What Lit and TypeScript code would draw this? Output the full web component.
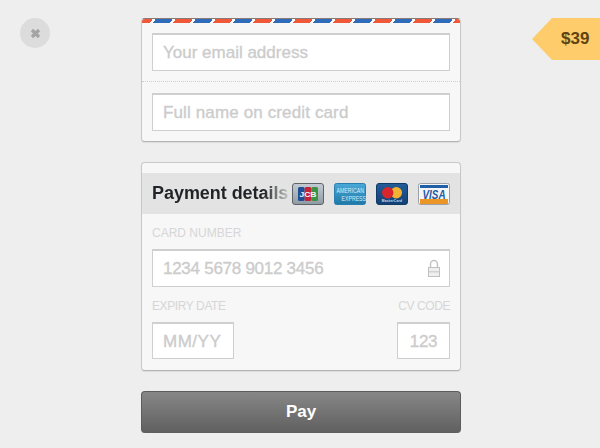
import { LitElement, html, css, svg } from 'lit';
import { customElement } from 'lit/decorators.js';

const jcb = svg`<svg class="cc" width="32" height="22" viewBox="0 0 32 22">
  <defs><linearGradient id="j" x1="0" y1="0" x2="0" y2="1"><stop offset="0" stop-color="#c3ccd4"/><stop offset="1" stop-color="#8f9aa3"/></linearGradient></defs>
  <rect x=".5" y=".5" width="31" height="21" rx="2.5" fill="url(#j)" stroke="#5d6468"/>
  <rect x="6" y="4" width="6.6" height="14" rx="1.5" fill="#1c4f96"/>
  <rect x="12.7" y="4" width="6.6" height="14" rx="1.5" fill="#c8213a"/>
  <rect x="19.4" y="4" width="6.6" height="14" rx="1.5" fill="#3a9444"/>
  <text x="7.5" y="14" font-family="Liberation Sans" font-size="8" font-weight="700" textLength="17" lengthAdjust="spacingAndGlyphs" fill="#f2f4f6">JCB</text>
</svg>`;

const amex = svg`<svg class="cc" width="32" height="22" viewBox="0 0 32 22">
  <defs><linearGradient id="a" x1="0" y1="0" x2="0" y2="1"><stop offset="0" stop-color="#4aa9d8"/><stop offset="1" stop-color="#1d78a8"/></linearGradient></defs>
  <rect x=".5" y=".5" width="31" height="21" rx="2" fill="url(#a)" stroke="#2b7fae"/>
  <text transform="translate(2.5 10) scale(1 1.3)" font-family="Liberation Sans" font-size="5.2" fill="#d8eef9">AMERICAN</text>
  <text transform="translate(7.5 18) scale(1 1.3)" font-family="Liberation Sans" font-size="5.2" fill="#d8eef9">EXPRESS</text>
</svg>`;

const master = svg`<svg class="cc" width="32" height="22" viewBox="0 0 32 22">
  <defs><linearGradient id="m" x1="0" y1="0" x2="0" y2="1"><stop offset="0" stop-color="#235d9a"/><stop offset="1" stop-color="#123f73"/></linearGradient></defs>
  <rect x=".5" y=".5" width="31" height="21" rx="2.5" fill="url(#m)" stroke="#123a66"/>
  <circle cx="20.3" cy="9.7" r="5.7" fill="#f2b233"/>
  <circle cx="11.7" cy="9.7" r="5.7" fill="#d8262c"/>
  <text x="16" y="18.8" text-anchor="middle" font-family="Liberation Sans" font-size="3.2" font-weight="700" letter-spacing=".3" fill="#d6e2ee">MasterCard</text>
</svg>`;

const visa = svg`<svg class="cc" width="32" height="22" viewBox="0 0 32 22">
  <rect x=".5" y=".5" width="31" height="21" rx="2" fill="#f4f5f6" stroke="#9aa0a5"/>
  <rect x="2" y="2" width="28" height="3" fill="#1f5fa8"/>
  <rect x="2" y="16" width="28" height="5" fill="#ea9526"/>
  <text x="4.5" y="15.6" font-family="Liberation Sans" font-size="12" font-weight="700" font-style="italic" textLength="23" lengthAdjust="spacingAndGlyphs" fill="#1c5aa6">VISA</text>
</svg>`;

const lock = svg`<svg width="12" height="18" viewBox="0 0 12 18" fill="none">
  <path d="M2.5 9V5a3.5 3.5 0 0 1 7 0V9" stroke="#c4c4c4" stroke-width="1.5"/>
  <rect x=".5" y="8.5" width="11" height="9" fill="#efefef" stroke="#c0c0c0"/>
  <rect x="1" y="12" width="10" height="1.5" fill="#d2d2d2"/>
</svg>`;

@customElement('app-root')
export class AppRoot extends LitElement {
  static styles = css`
    :host {
      display: block;
      width: 600px;
      height: 448px;
      overflow: hidden;
      position: relative;
      background: #eeeeee;
      font-family: 'Liberation Sans', Arial, sans-serif;
    }
    .close {
      position: absolute;
      left: 20px;
      top: 18px;
      width: 30px;
      height: 30px;
      border-radius: 50%;
      background: #dcdcdc;
      display: flex;
      align-items: center;
      justify-content: center;
    }
    .price {
      position: absolute;
      right: 0;
      top: 18px;
      width: 68px;
      height: 42px;
      box-sizing: border-box;
      padding-left: 29px;
      background: #fecc6b;
      clip-path: polygon(20px 0, 100% 0, 100% 100%, 20px 100%, 0 50%);
      color: #5f4410;
      font-size: 17px;
      font-weight: 700;
      line-height: 42px;
    }
    .col {
      width: 320px;
      margin-left: 141px;
      padding-top: 18px;
      display: flex;
      flex-direction: column;
    }
    .card {
      box-sizing: border-box;
      width: 320px;
      background: #f7f7f7;
      border: 1px solid #c8c8c8;
      border-bottom-color: #b4b4b4;
      border-radius: 4px;
      box-shadow: 0 1px 1px rgba(0, 0, 0, 0.08);
    }
    .who {
      height: 124px;
      overflow: hidden;
      border-top-color: #8a7a76;
    }
    .stripe {
      height: 4px;
      background: repeating-linear-gradient(
        -60deg,
        #f0583a -8.72px 6px,
        #ffffff 6px 8.6px,
        #2f6cbc 8.6px 23.3px,
        #ffffff 23.3px 25.92px
      );
    }
    .input {
      box-sizing: border-box;
      background: #ffffff;
      border: 1px solid #cfcfcf;
      border-top-width: 2px;
      height: 38px;
      color: #cccccc;
      font-size: 17px;
      line-height: 35px;
      padding: 0 10px;
      white-space: nowrap;
      position: relative;
      -webkit-text-stroke: 0.35px #cccccc;
    }
    .who .input {
      margin: 10px 10px 0;
    }
    .who .name {
      letter-spacing: 0.13px;
    }
    .digits {
      letter-spacing: -0.27px;
    }
    .dots {
      height: 0;
      border-top: 1px dotted #d0d0d0;
      margin-top: 10px;
    }
    .who .dots + .input {
      margin-top: 11px;
    }
    .pay {
      height: 209px;
      margin-top: 20px;
      padding-top: 10px;
    }
    .band {
      height: 41px;
      background: #e3e3e3;
      display: flex;
      align-items: center;
      padding: 0 10px;
      justify-content: space-between;
    }
    .title {
      font-size: 18px;
      font-weight: 700;
      line-height: 41px;
      width: 139px;
      white-space: nowrap;
      overflow: hidden;
      letter-spacing: -0.05px;
      background: linear-gradient(90deg, #202428 0 112px, #c4c4c4 136px);
      -webkit-background-clip: text;
      background-clip: text;
      color: transparent;
    }
    .cards {
      display: flex;
      gap: 10px;
    }
    .cc {
      display: block;
    }
    .body {
      padding: 0 10px;
      display: flex;
      flex-direction: column;
    }
    .label {
      font-size: 12px;
      line-height: 14px;
      color: #d6d6d6;
      margin: 12px 0 9px;
      white-space: nowrap;
    }
    .lock {
      position: absolute;
      right: 9px;
      top: 8px;
      line-height: 0;
    }
    .row {
      display: flex;
      justify-content: space-between;
      margin-top: 3px;
    }
    .field {
      display: flex;
      flex-direction: column;
    }
    .field.right {
      align-items: flex-end;
    }
    .field .label {
      margin: 9px 0 9px;
      letter-spacing: -0.4px;
    }
    .exp {
      width: 82px;
      height: 37px;
      letter-spacing: 0.5px;
    }
    .cv {
      width: 53px;
      height: 37px;
      text-align: center;
      padding: 0;
      letter-spacing: -0.3px;
    }
    .btn {
      box-sizing: border-box;
      margin-top: 20px;
      height: 42px;
      border-radius: 4px;
      background: linear-gradient(#878787, #5f5f5f);
      border: 1px solid #5c5c5c;
      border-bottom: 0;
      color: #ffffff;
      font-size: 17px;
      font-weight: 700;
      text-align: center;
      line-height: 40px;
    }
  `;

  render() {
    return html`
      <div class="close">
        <svg width="11" height="11" viewBox="0 0 11 11">
          <path d="M2 2 L9 9 M9 2 L2 9" stroke="#a4a4a4" stroke-width="3.4"/>
        </svg>
      </div>
      <div class="price">$39</div>
      <div class="col">
        <div class="card who">
          <div class="stripe"></div>
          <div class="input">Your email address</div>
          <div class="dots"></div>
          <div class="input name">Full name on credit card</div>
        </div>
        <div class="card pay">
          <div class="band">
            <div class="title">Payment details</div>
            <div class="cards">${jcb}${amex}${master}${visa}</div>
          </div>
          <div class="body">
            <div class="label">CARD NUMBER</div>
            <div class="input digits">1234 5678 9012 3456<span class="lock">${lock}</span></div>
            <div class="row">
              <div class="field">
                <div class="label">EXPIRY DATE</div>
                <div class="input exp">MM/YY</div>
              </div>
              <div class="field right">
                <div class="label">CV CODE</div>
                <div class="input cv">123</div>
              </div>
            </div>
          </div>
        </div>
        <div class="btn">Pay</div>
      </div>
    `;
  }
}
